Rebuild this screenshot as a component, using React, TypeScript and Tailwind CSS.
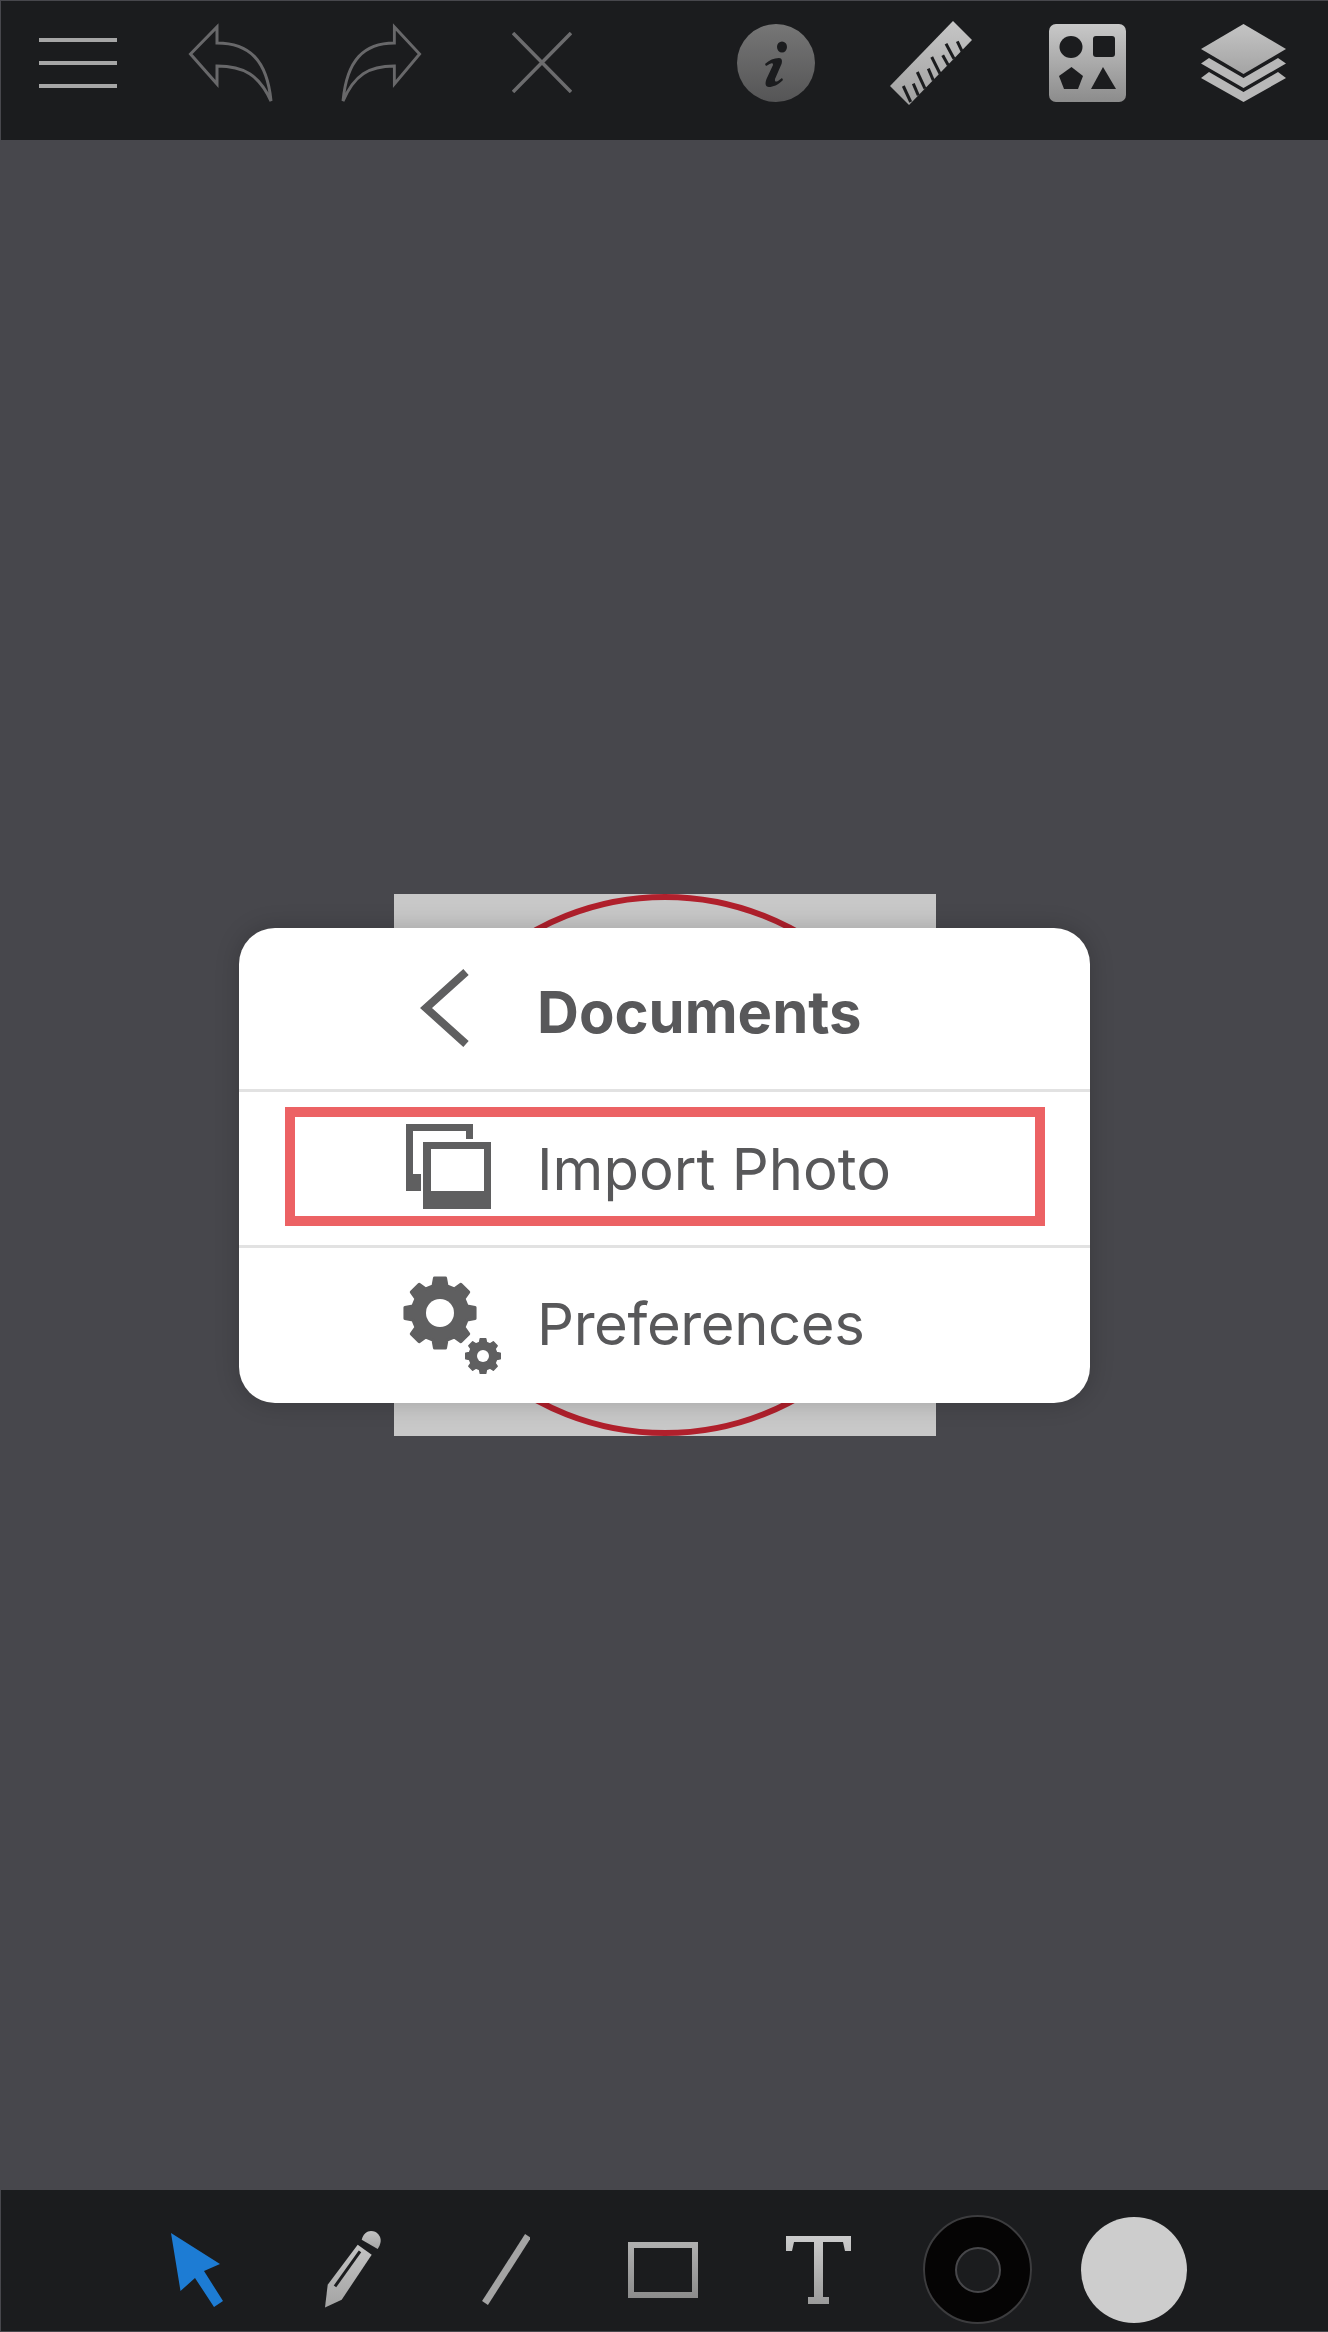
function GreyGradient({ id, from = "#c8c8c8", to = "#8c8c8c" }: { id: string; from?: string; to?: string }) {
	return (
		<defs>
			<linearGradient id={id} x1="0" y1="0" x2="0" y2="1">
				<stop offset="0" stopColor={from} />
				<stop offset="1" stopColor={to} />
			</linearGradient>
		</defs>
	);
}

function Menu() {
	return (
		<div className="flex w-[78px] flex-col gap-[19px]">
			<div className="h-[4px] bg-[#a6a6a6]" />
			<div className="h-[4px] bg-[#a6a6a6]" />
			<div className="h-[4px] bg-[#a6a6a6]" />
		</div>
	);
}

function Arrow({ flip, className }: { flip?: boolean; className: string }) {
	return (
		<svg viewBox="0 0 82 76" preserveAspectRatio="none" className={className} overflow="visible">
			<path
				d="M1.5 29 L28 2 V18 C60 18 78 35 82 76 C70 50 55 41 28 41 V59 Z"
				fill="none"
				stroke="#68686a"
				strokeWidth="3"
				transform={flip ? "translate(82 0) scale(-1 1)" : undefined}
			/>
		</svg>
	);
}

function Close() {
	return (
		<svg viewBox="0 0 60 61" className="h-[61px] w-[60px]">
			<path d="M1 1 L59 60 M59 1 L1 60" stroke="#6c6c6e" strokeWidth="3.5" />
		</svg>
	);
}

function Info() {
	return (
		<svg viewBox="0 0 78 78" className="h-[78px] w-[78px]">
			<GreyGradient id="info" from="#767676" to="#555556" />
			<circle cx="39" cy="39" r="39" fill="url(#info)" />
			<ellipse cx="45" cy="23" rx="5" ry="5.5" fill="#1b1c1e" />
			<path
				d="M28 40 C32 36 37 34 42 34 C45 34 45.5 37 44.5 40 L38 55 C37.5 58 39 58 41 57 L45 54 L46 56 C41 61 36 63 32 63 C28 63 28 59 29.5 55 L36 41 C36 38 34 39 29 42 Z"
				fill="#1b1c1e"
			/>
		</svg>
	);
}

function Ruler() {
	// notches cut in from the lower right edge
	const ticks = [
		[72.7, 31.7, 67.3, 20.3],
		[64, 37.7, 56, 22.7],
		[58.3, 44.3, 52.7, 34.3],
		[50, 52.7, 41.7, 36],
		[43.3, 59.3, 38.3, 47.7],
		[35, 67.7, 27.3, 51],
		[28.3, 74.3, 23.3, 62.7],
		[20.7, 81, 13.3, 65],
	];
	return (
		<svg viewBox="0 0 82 84" className="h-[84px] w-[82px]">
			<GreyGradient id="ruler" from="#c6c6c6" to="#a0a0a0" />
			<path d="M63 0 L82 19 L19 84 L0 65 Z" fill="url(#ruler)" />
			{ticks.map((t) => (
				<line key={t[0]} x1={t[0]} y1={t[1]} x2={t[2]} y2={t[3]} stroke="#1b1c1e" strokeWidth="3" />
			))}
		</svg>
	);
}

function Shapes() {
	return (
		<svg viewBox="0 0 77 78" className="h-[78px] w-[77px]">
			<GreyGradient id="shapes" />
			<rect width="77" height="78" rx="7" fill="url(#shapes)" />
			<ellipse cx="22" cy="23" rx="11.5" ry="11" fill="#1b1c1e" />
			<rect x="44" y="12" width="22" height="21" rx="3" fill="#1b1c1e" />
			<path d="M22.5 43 L34 52 L29 65 H15 L10 52 Z" fill="#1b1c1e" />
			<path d="M54 43 L67 65 H42 Z" fill="#1b1c1e" />
		</svg>
	);
}

function Layers() {
	return (
		<svg viewBox="0 0 85 78" className="h-[78px] w-[85px]">
			<GreyGradient id="layers" from="#c4c4c4" to="#a4a4a4" />
			<path d="M42.5 0 L85 25 L42.5 50 L0 25 Z" fill="url(#layers)" />
			<path d="M8 34 L42.5 54 L77 34 L85 39.5 L42.5 64 L0 39.5 Z" fill="#b8b8b8" />
			<path d="M8 48 L42.5 68 L77 48 L85 54 L42.5 78 L0 54 Z" fill="#b8b8b8" />
		</svg>
	);
}

function Cursor() {
	return (
		<svg viewBox="0 0 52 74" className="h-[74px] w-[52px]">
			<path d="M0 0 L49 31 L33 38 L52 68 L43 74 L24 45 L9.5 58 Z" fill="#1d7cd4" />
		</svg>
	);
}

function Pencil() {
	return (
		<svg viewBox="0 0 56 77" className="h-[77px] w-[56px]">
			<GreyGradient id="pencil" from="#c4c4c4" to="#a4a4a4" />
			<path d="M36.7 8.7 C38 3 42 0 46 0 C52 0 56 5 55.7 10 C55.5 13 54 16 52.7 18 Z" fill="url(#pencil)" />
			<path d="M32.7 13.7 L46.7 23.7 L16.7 68.7 L0 76.5 L2.7 53.7 Z" fill="url(#pencil)" />
			<path d="M35 20.3 L10 55.3" stroke="#1b1c1e" strokeWidth="3" />
		</svg>
	);
}

function Line() {
	return (
		<svg viewBox="0 0 48 71" className="h-[71px] w-[48px]">
			<path d="M46 2 L3 69" stroke="#a4a4a4" strokeWidth="7" />
		</svg>
	);
}

function Rectangle() {
	return (
		<svg viewBox="0 0 70 56" className="h-[56px] w-[70px]">
			<GreyGradient id="rect" from="#b0b0b0" to="#8c8c8c" />
			<path d="M0 0 H70 V56 H0 Z M6 6 V50 H64 V6 Z" fillRule="evenodd" fill="url(#rect)" />
		</svg>
	);
}

function TextTool() {
	return (
		<svg viewBox="0 0 65 68" className="h-[68px] w-[65px]">
			<GreyGradient id="ttool" from="#cccccc" to="#9a9a9a" />
			<path
				d="M0 0 H65 V15 L59 15 L57 6 H37 V61 H43 V68 H22 V61 H28 V6 H8 L6 15 L0 15 Z"
				fill="url(#ttool)"
			/>
		</svg>
	);
}

function gearPath(cx: number, cy: number, R: number, r: number, teeth: number) {
	const step = (Math.PI * 2) / teeth;
	const parts: string[] = [];
	for (let i = 0; i < teeth; i++) {
		const a = i * step - Math.PI / 2;
		const pts: [number, number][] = [
			[r, a - step * 0.32],
			[R, a - step * 0.2],
			[R, a + step * 0.2],
			[r, a + step * 0.32],
		];
		for (const [rad, ang] of pts) {
			parts.push(`${(cx + rad * Math.cos(ang)).toFixed(2)} ${(cy + rad * Math.sin(ang)).toFixed(2)}`);
		}
	}
	return "M" + parts.join(" L") + " Z";
}

function Gears() {
	return (
		<svg viewBox="0 0 100 99" className="h-[99px] w-[100px]">
			<path d={gearPath(38, 37, 35.5, 28, 8)} fill="#5f5f60" stroke="#5f5f60" strokeWidth="3" strokeLinejoin="round" />
			<circle cx="38" cy="37" r="14" fill="#fff" />
			<path d={gearPath(81, 80, 17.5, 14, 8)} fill="#5f5f60" stroke="#5f5f60" strokeWidth="1.5" strokeLinejoin="round" />
			<circle cx="81" cy="80" r="6" fill="#fff" />
		</svg>
	);
}

function Photos() {
	return (
		<svg viewBox="0 0 85 85" className="h-[85px] w-[85px]">
			<path d="M0 0 H67 V15 H60 V7 H7 V50 H15 V67 H0 Z" fill="#5f5f60" />
			<path d="M17 18 H85 V85 H17 Z M25 25 V67 H78 V25 Z" fillRule="evenodd" fill="#5f5f60" />
		</svg>
	);
}

function Chevron() {
	return (
		<svg viewBox="0 0 49 78" className="h-[78px] w-[49px]">
			<path d="M46 3 L6 39 L46 75" fill="none" stroke="#5f5f60" strokeWidth="8" />
		</svg>
	);
}

function App() {
	return (
		<div className="flex h-[2332px] w-[1328px] flex-col bg-[#47474c] py-px pl-px font-['Inter','Noto_Sans',sans-serif]">
			<div className="flex h-[139px] items-center bg-[#1b1c1e] pb-[16px] pl-[38px]">
				<Menu />
				<Arrow className="ml-[72px] h-[76px] w-[82px]" />
				<Arrow flip className="ml-[72px] h-[76px] w-[78px]" />
				<div className="ml-[91px]">
					<Close />
				</div>
				<div className="ml-[165px]">
					<Info />
				</div>
				<div className="ml-[75px]">
					<Ruler />
				</div>
				<div className="ml-[77px]">
					<Shapes />
				</div>
				<div className="ml-[75px]">
					<Layers />
				</div>
			</div>

			<div className="grid flex-1 place-items-center">
				<div className="col-start-1 row-start-1 flex h-[542px] w-[542px] bg-[#c8c8c8]">
					<div className="h-full w-full rounded-full border-[6px] border-[#b0202c]" />
				</div>
				<div className="col-start-1 row-start-1 flex h-[475px] w-[851px] flex-col overflow-hidden rounded-[36px] bg-white text-[#58585a] shadow-[0_0_24px_rgba(0,0,0,0.2)]">
					<div className="flex h-[161px] items-center pl-[181px]">
						<Chevron />
						<span className="mt-[8px] ml-[68px] text-[58px] font-bold">Documents</span>
					</div>
					<div className="h-[3px] bg-[#e2e2e2]" />
					<div className="mt-[15px] mr-[45px] ml-[46px] flex h-[119px] items-center border-[10px] border-[#ec6264] pl-[111px]">
						<Photos />
						<span className="mt-[6px] ml-[46px] text-[58px]">Import Photo</span>
					</div>
					<div className="mt-[19px] h-[3px] bg-[#e2e2e2]" />
					<div className="flex flex-1 items-center pl-[163px]">
						<Gears />
						<span className="mb-[2px] ml-[35px] text-[58px] tracking-[-0.4px]">Preferences</span>
					</div>
				</div>
			</div>

			<div className="flex h-[141px] items-center bg-[#1b1c1e] pt-[18px] pl-[170px]">
				<Cursor />
				<div className="ml-[102px]">
					<Pencil />
				</div>
				<div className="ml-[101px]">
					<Line />
				</div>
				<div className="ml-[98px]">
					<Rectangle />
				</div>
				<div className="ml-[88px]">
					<TextTool />
				</div>
				<div className="ml-[72px] flex h-[109px] w-[109px] items-center justify-center rounded-full border-2 border-[#3c3c3e] bg-[#050404]">
					<div className="h-[46px] w-[46px] rounded-full border-2 border-[#47474a] bg-[#1b1c1e]" />
				</div>
				<div className="ml-[49px] h-[106px] w-[106px] rounded-full bg-[#cdcdcd]" />
			</div>
		</div>
	);
}

export default App;
